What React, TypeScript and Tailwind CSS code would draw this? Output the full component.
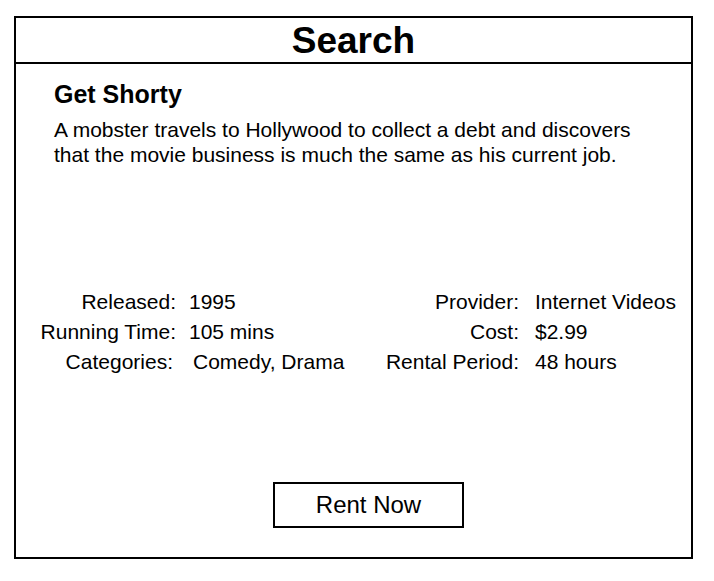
type Row = { label: string; value: string; nudge?: boolean };

const leftRows: Row[] = [
  { label: "Released:", value: "1995" },
  { label: "Running Time:", value: "105 mins" },
  { label: "Categories:", value: "Comedy, Drama", nudge: true },
];

const rightRows: Row[] = [
  { label: "Provider:", value: "Internet Videos" },
  { label: "Cost:", value: "$2.99" },
  { label: "Rental Period:", value: "48 hours" },
];

function DetailGrid({ rows, cols }: { rows: Row[]; cols: string }) {
  return (
    <div className={`grid ${cols} text-[21px] leading-[30px]`}>
      {rows.map((row) => (
        <div key={row.label} className="contents">
          <span className={row.nudge ? "pr-[3px] text-right" : "text-right"}>{row.label}</span>
          <span className={row.nudge ? "pl-[4px]" : ""}>{row.value}</span>
        </div>
      ))}
    </div>
  );
}

export default function App() {
  return (
    <div
      className="min-h-[581px] bg-white pt-4 pl-[14px] text-black"
      style={{ fontFamily: '"Liberation Sans", Arial, sans-serif' }}
    >
      <div className="flex h-[543px] w-[679px] flex-col border-2 border-black">
        <header className="flex h-[46px] items-center justify-center border-b-2 border-black">
          <h1 className="text-[37px] font-bold leading-none">Search</h1>
        </header>

        <section className="pl-[38px] pr-[39px] pt-[15px]">
          <h2 className="text-[25px] font-bold leading-[30px]">Get Shorty</h2>
          <p className="mt-2 text-[21px] leading-[25px]">
            A mobster travels to Hollywood to collect a debt and discovers that
            the movie business is much the same as his current job.
          </p>
        </section>

        <div className="mt-[120px] flex">
          <div className="w-[354px] shrink-0">
            <DetailGrid rows={leftRows} cols="grid-cols-[160px_auto] gap-x-[13px]" />
          </div>
          <DetailGrid rows={rightRows} cols="grid-cols-[149px_auto] gap-x-[16px]" />
        </div>

        <button
          type="button"
          className="ml-[257px] mt-[105px] h-[46px] w-[191px] border-2 border-black text-[24px] leading-none"
        >
          Rent Now
        </button>
      </div>
    </div>
  );
}
